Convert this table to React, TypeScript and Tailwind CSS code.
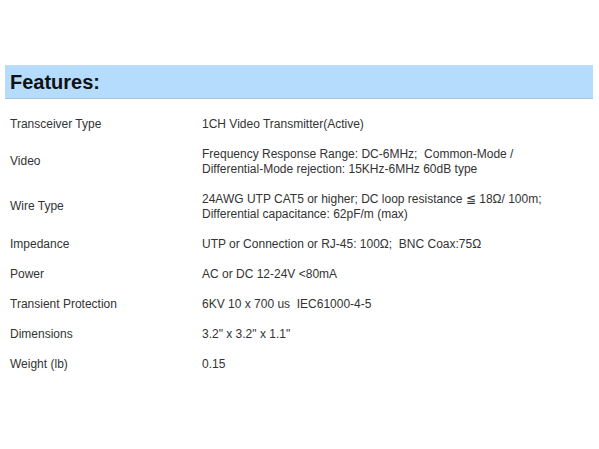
import React from 'react';

const specs: { label: string; value: string[] }[] = [
  { label: 'Transceiver Type', value: ['1CH Video Transmitter(Active)'] },
  {
    label: 'Video',
    value: [
      'Frequency Response Range: DC-6MHz;  Common-Mode /',
      'Differential-Mode rejection: 15KHz-6MHz 60dB type',
    ],
  },
  {
    label: 'Wire Type',
    value: [
      '24AWG UTP CAT5 or higher; DC loop resistance \u2266 18\u03A9/ 100m;',
      'Differential capacitance: 62pF/m (max)',
    ],
  },
  { label: 'Impedance', value: ['UTP or Connection or RJ-45: 100\u03A9;  BNC Coax:75\u03A9'] },
  { label: 'Power', value: ['AC or DC 12-24V <80mA'] },
  { label: 'Transient Protection', value: ['6KV 10 x 700 us  IEC61000-4-5'] },
  { label: 'Dimensions', value: ['3.2" x 3.2" x 1.1"'] },
  { label: 'Weight (lb)', value: ['0.15'] },
];

const App: React.FC = () => {
  return (
    <div
      className="w-[599px] h-[449px] bg-white pt-[65px] pl-[5px] pr-[6px]"
      style={{ fontFamily: '"Liberation Sans", Arial, sans-serif' }}
    >
      <div className="h-[34px] bg-[#b5dbfd] border-t border-[#c4dcf0] border-b border-b-[#a9c7e2] flex items-center pl-[5px]">
        <h2 className="text-[20px] font-bold text-[#111] leading-none">Features:</h2>
      </div>

      <div className="mt-[10px]">
        {specs.map((row) => (
          <div
            key={row.label}
            className="flex items-center py-[7.5px] text-[12px] leading-[15px] text-[#333]"
          >
            <div className="w-[197px] pl-[5px] whitespace-pre">{row.label}</div>
            <div className="flex flex-col">
              {row.value.map((line) => (
                <span key={line} className="whitespace-pre">
                  {line}
                </span>
              ))}
            </div>
          </div>
        ))}
      </div>
    </div>
  );
};

export default App;
